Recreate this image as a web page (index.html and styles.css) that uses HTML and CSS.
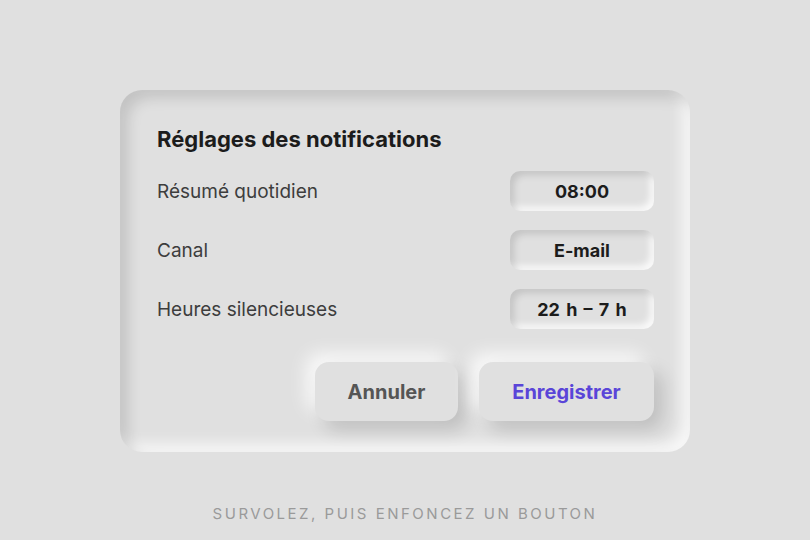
FILE: index.html
```html
<!DOCTYPE html>
<html lang="fr">
<head>
  <meta charset="UTF-8" />
  <meta name="viewport" content="width=device-width, initial-scale=1.0"/>
  <title>Réglages des notifications</title>
  <link rel="stylesheet" href="styles.css">
</head>
<body>
  <div class="stage">
    <div class="card">
      <h1>Réglages des notifications</h1>

      <div class="row">
        <span class="label">Résumé quotidien</span>
        <span class="value">08:00</span>
      </div>
      <div class="row">
        <span class="label">Canal</span>
        <span class="value">E-mail</span>
      </div>
      <div class="row">
        <span class="label">Heures silencieuses</span>
        <span class="value">22 h – 7 h</span>
      </div>

      <div class="actions">
        <button class="cancel">Annuler</button>
        <button class="save">Enregistrer</button>
      </div>
    </div>

    <p class="hint">Survolez, puis enfoncez un bouton</p>
  </div>
</body>
</html>
```

FILE: styles.css
```css
body {
  font-family: Inter, 'Noto Sans', sans-serif;
  margin: 0;
  background: #e0e0e0;
  color: #333;
}

.stage {
  display: flex;
  flex-direction: column;
  align-items: center;
  padding-top: 90px;
}

.card {
  width: 570px;
  box-sizing: border-box;
  padding: 36px 36px 31px 37px;
  border-radius: 22px;
  background: #e0e0e0;
  box-shadow: inset 8px 8px 14px rgba(0,0,0,0.13),
              inset -8px -8px 14px rgba(255,255,255,0.75);
}

h1 {
  margin: 0 0 19px;
  font-size: 22px;
  font-weight: 700;
  color: #1c1c1c;
  line-height: 26px;
}

.row {
  display: flex;
  justify-content: space-between;
  align-items: center;
  margin-bottom: 19px;
}

.label {
  font-size: 19px;
  color: #3d3d3d;
}

.value {
  width: 144px;
  height: 40px;
  display: flex;
  align-items: center;
  justify-content: center;
  border-radius: 10px;
  font-size: 18px;
  font-weight: 700;
  color: #1c1c1c;
  word-spacing: 2px;
  box-shadow: inset 4px 4px 7px rgba(0,0,0,0.13),
              inset -4px -4px 7px rgba(255,255,255,0.85);
}

.actions {
  display: flex;
  justify-content: flex-end;
  gap: 21px;
  margin-top: 33px;
}

button {
  height: 59px;
  border: none;
  border-radius: 14px;
  background: #e0e0e0;
  font-family: inherit;
  font-size: 20px;
  font-weight: 700;
  cursor: pointer;
  box-shadow: 9px 9px 18px rgba(0,0,0,0.15),
              -9px -9px 18px rgba(255,255,255,0.8);
}

button.cancel {
  width: 143px;
  color: #555;
}

button.save {
  width: 175px;
  color: #5a45d8;
}

.hint {
  margin: 52px 0 0;
  font-size: 15px;
  letter-spacing: 2.5px;
  text-transform: uppercase;
  color: #9a9a9a;
}
```
